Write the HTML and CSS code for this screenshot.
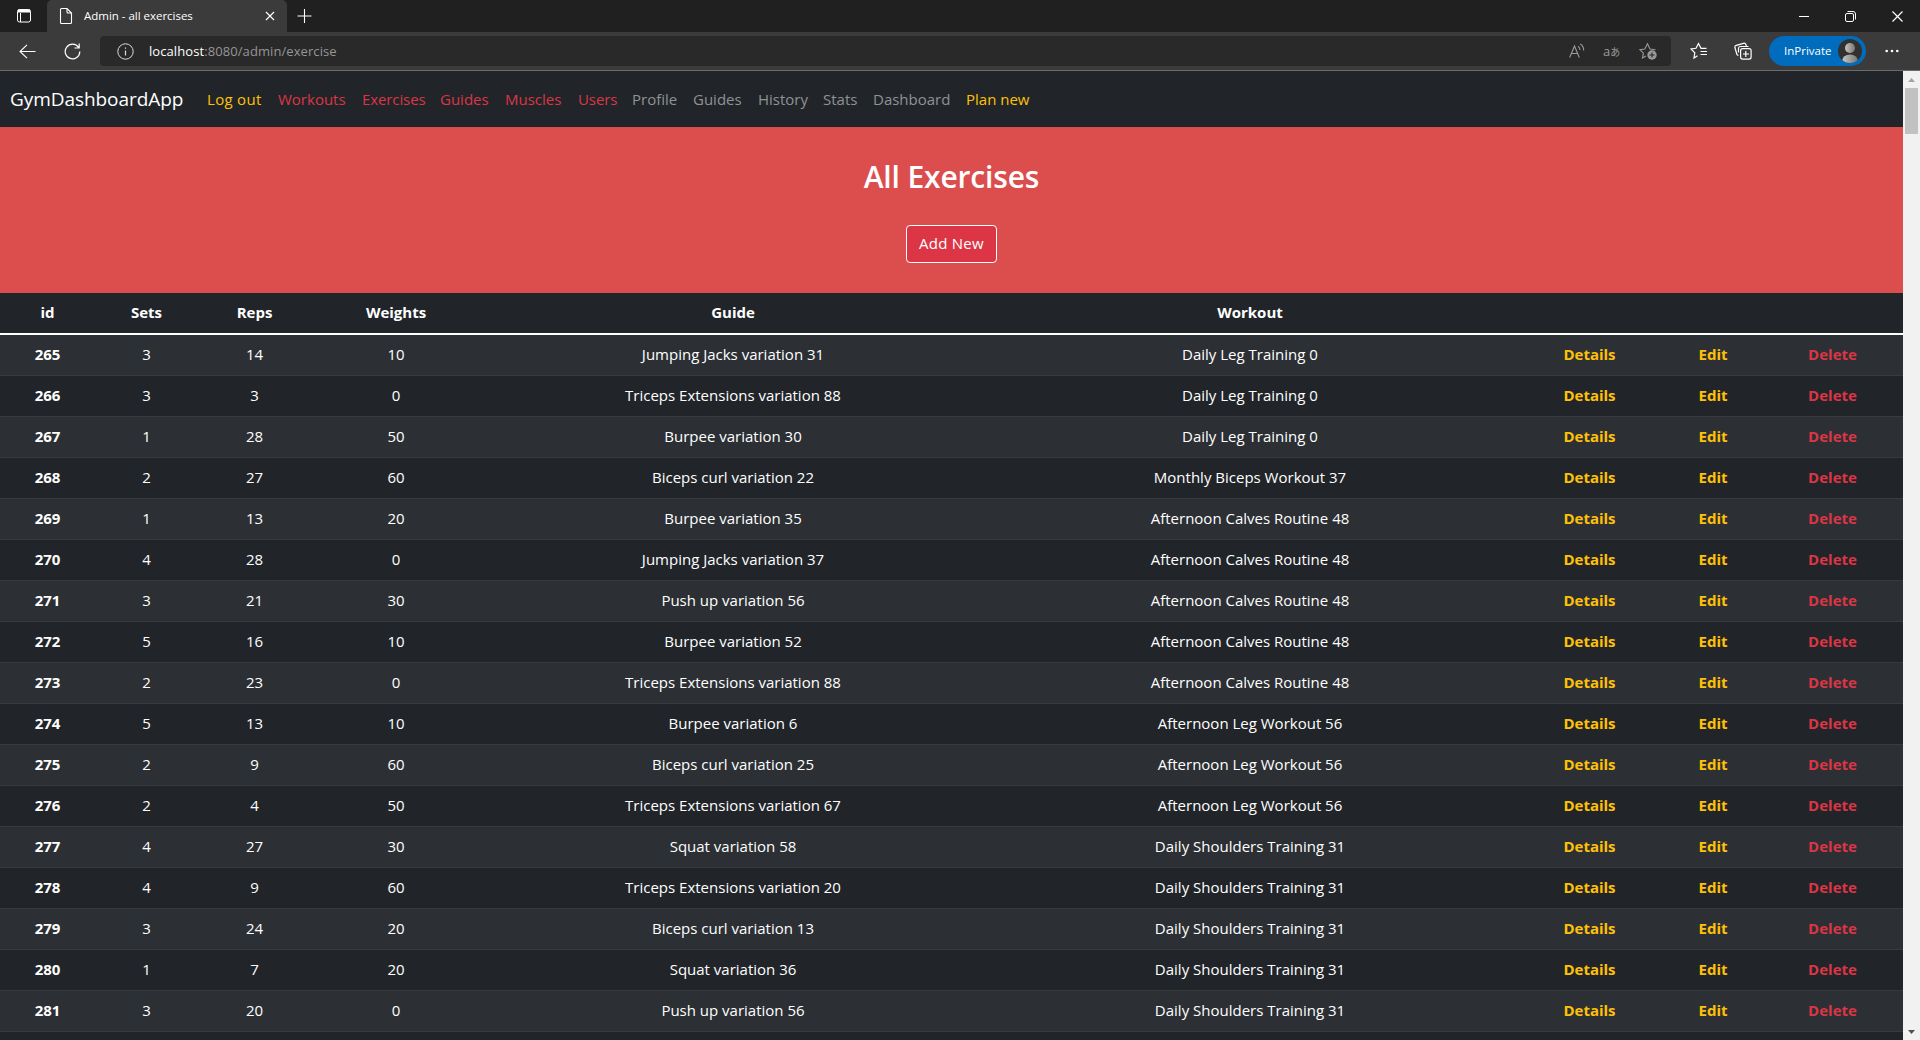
FILE: index.html
```html
<!DOCTYPE html>
<html lang="en">
<head>
<meta charset="utf-8">
<title>Admin - all exercises</title>
<link rel="stylesheet" href="styles.css">
</head>
<body>
<div class="window">
  <div class="tabbar">
    <svg class="tab-actions" width="16" height="16" viewBox="0 0 16 16" fill="none" stroke="#fff"><rect x="1.5" y="1.5" width="13" height="12.5" rx="2"/><path d="M2 3.5h12M2 2.5h12" stroke-width="2"/><path d="M4.5 5v9"/></svg>
    <div class="tab">
      <svg width="14" height="18" viewBox="0 0 14 18" fill="none" stroke="#fff" stroke-width="1.1"><path d="M2.5 1.5h5.5l4.5 4.5v9.5a1 1 0 0 1-1 1h-9a1 1 0 0 1-1-1v-13a1 1 0 0 1 1-1zM8 1.500v3.500a1 1 0 0 0 1 1h3.500"/></svg>
      <span class="tab-title">Admin - all exercises</span>
      <svg class="tab-close" width="10" height="10" viewBox="0 0 10 10" stroke="#fff" stroke-width="1.2"><path d="M1 1l8 8M9 1l-8 8"/></svg>
    </div>
    <svg class="new-tab" width="16" height="16" viewBox="0 0 16 16" stroke="#fff" stroke-width="1.1"><path d="M8.500 1v14M1.500 8h14"/></svg>
    <div class="controls">
      <svg width="10" height="10" viewBox="0 0 10 10" stroke="#fff"><path d="M0 5.500h10"/></svg>
      <svg width="11" height="11" viewBox="0 0 11 11" fill="none" stroke="#fff"><rect x=".5" y="2.500" width="8" height="8" rx="1.500"/><path d="M2.500 .5h5.500a2.500 2.500 0 0 1 2.500 2.500v5.500"/></svg>
      <svg width="11" height="11" viewBox="0 0 11 11" stroke="#fff" stroke-width="1.200"><path d="M.5 .5l10 10M10.500 .5l-10 10"/></svg>
    </div>
  </div>

  <div class="toolbar">
    <svg class="back" width="17" height="15" viewBox="0 0 17 15" fill="none" stroke="#fff" stroke-width="1.100"><path d="M16.500 7.500H1M8 .8L1 7.500l7 6.700"/></svg>
    <svg class="reload" width="17" height="17" viewBox="0 0 17 17" fill="none" stroke="#fff" stroke-width="1.200"><path d="M14.600 4.500a7.300 7.300 0 1 0 1.200 4M15.200 .5v4.500h-4.700"/></svg>
    <div class="address">
      <svg class="info" width="17" height="17" viewBox="0 0 17 17" fill="none" stroke="#ddd"><circle cx="8.500" cy="8.500" r="7.700"/><path d="M8.500 7.500v5M8.500 4.500v1.300" stroke-width="1.200"/></svg>
      <span class="url"><b>localhost</b>:8080/admin/exercise</span>
      <div class="address-actions">
        <svg width="16" height="16" viewBox="0 0 16 16" fill="none" stroke="#999" stroke-width="1.100"><path d="M.7 14.500L5.500 3l4.800 11.500M2.400 10.500h6.300M9 3.200q2 1.200 2 3.800M11.200 1q3.500 2 3.500 6.500"/></svg>
        <span class="translate">a<small>あ</small></span>
        <svg width="18" height="18" viewBox="0 0 18 18" fill="none" stroke="#999" stroke-width="1.100"><path d="M7 14l-3.500 2 .9-4.800L.9 7.700l4.900-.7L8.500 1.700l2.500 5.300 5.500.7"/><circle cx="13" cy="13" r="4.700" fill="#999" stroke="none"/><path d="M10.500 13h5M13 10.500v5" stroke="#292929"/></svg>
      </div>
    </div>
    <svg class="favorites" width="18" height="18" viewBox="0 0 18 18" fill="none" stroke="#fff" stroke-width="1.200"><path d="M7.500 13.700L4 16l.8-5.300L1 7l5-.7L8.500 1.500 11 6.300h5.500M10.500 9.500h6.500M10.500 12.500h6.500"/></svg>
    <svg class="collections" width="18" height="18" viewBox="0 0 18 18" fill="none" stroke="#fff" stroke-width="1.200"><rect x="6.600" y="6.600" width="10.500" height="10.500" rx="2"/><path d="M11.800 9v6M9 12h6M4.500 13.500A2 2 0 0 1 2.800 12L.9 5.500A2 2 0 0 1 2.300 3.300L9.500 1.300a2 2 0 0 1 2.400 1.200l.5 1.700M4.500 10.500V6.500a2 2 0 0 1 2-2h8"/></svg>
    <div class="profile"><span>InPrivate</span>
      <svg width="24" height="24" viewBox="0 0 24 24"><defs><linearGradient id="person"><stop stop-color="#c8c4c0"/><stop offset="1" stop-color="#777"/></linearGradient><clipPath id="disc"><circle cx="12" cy="12" r="12"/></clipPath></defs><circle cx="12" cy="12" r="12" fill="#323130"/><g clip-path="url(#disc)" fill="url(#person)"><circle cx="12" cy="9" r="5"/><path d="M4 24v-2q1-6.500 8-6.500t8 6.500v2z"/></g></svg>
    </div>
    <svg class="more" width="14" height="4" viewBox="0 0 14 4" fill="#fff"><circle cx="1.700" cy="2" r="1.300"/><circle cx="7" cy="2" r="1.300"/><circle cx="12.300" cy="2" r="1.300"/></svg>
  </div>

  <div class="viewport">
    <main class="page">
      <nav class="navbar">
        <a class="brand">GymDashboardApp</a>
        <a class="link warning w-logout">Log out</a>
        <a class="link danger w-workouts">Workouts</a>
        <a class="link danger w-exercises">Exercises</a>
        <a class="link danger w-guides">Guides</a>
        <a class="link danger w-muscles">Muscles</a>
        <a class="link danger w-users">Users</a>
        <a class="link w-profile">Profile</a>
        <a class="link w-guides">Guides</a>
        <a class="link w-history">History</a>
        <a class="link w-stats">Stats</a>
        <a class="link w-dashboard">Dashboard</a>
        <a class="link warning">Plan new</a>
      </nav>
      <header class="hero">
        <h1>All Exercises</h1>
        <a class="button">Add New</a>
      </header>
      <table class="exercises">
        <colgroup><col class="c-id"><col class="c-sets"><col class="c-reps"><col class="c-weights"><col class="c-guide"><col class="c-workout"><col class="c-details"><col class="c-edit"><col class="c-delete"></colgroup>
        <thead><tr><th>id</th><th>Sets</th><th>Reps</th><th>Weights</th><th>Guide</th><th>Workout</th><th></th><th></th><th></th></tr></thead>
        <tbody>
          <tr><th>265</th><td>3</td><td>14</td><td>10</td><td>Jumping Jacks variation 31</td><td>Daily Leg Training 0</td><th class="warning">Details</th><th class="warning">Edit</th><th class="danger">Delete</th></tr>
          <tr><th>266</th><td>3</td><td>3</td><td>0</td><td>Triceps Extensions variation 88</td><td>Daily Leg Training 0</td><th class="warning">Details</th><th class="warning">Edit</th><th class="danger">Delete</th></tr>
          <tr><th>267</th><td>1</td><td>28</td><td>50</td><td>Burpee variation 30</td><td>Daily Leg Training 0</td><th class="warning">Details</th><th class="warning">Edit</th><th class="danger">Delete</th></tr>
          <tr><th>268</th><td>2</td><td>27</td><td>60</td><td>Biceps curl variation 22</td><td>Monthly Biceps Workout 37</td><th class="warning">Details</th><th class="warning">Edit</th><th class="danger">Delete</th></tr>
          <tr><th>269</th><td>1</td><td>13</td><td>20</td><td>Burpee variation 35</td><td>Afternoon Calves Routine 48</td><th class="warning">Details</th><th class="warning">Edit</th><th class="danger">Delete</th></tr>
          <tr><th>270</th><td>4</td><td>28</td><td>0</td><td>Jumping Jacks variation 37</td><td>Afternoon Calves Routine 48</td><th class="warning">Details</th><th class="warning">Edit</th><th class="danger">Delete</th></tr>
          <tr><th>271</th><td>3</td><td>21</td><td>30</td><td>Push up variation 56</td><td>Afternoon Calves Routine 48</td><th class="warning">Details</th><th class="warning">Edit</th><th class="danger">Delete</th></tr>
          <tr><th>272</th><td>5</td><td>16</td><td>10</td><td>Burpee variation 52</td><td>Afternoon Calves Routine 48</td><th class="warning">Details</th><th class="warning">Edit</th><th class="danger">Delete</th></tr>
          <tr><th>273</th><td>2</td><td>23</td><td>0</td><td>Triceps Extensions variation 88</td><td>Afternoon Calves Routine 48</td><th class="warning">Details</th><th class="warning">Edit</th><th class="danger">Delete</th></tr>
          <tr><th>274</th><td>5</td><td>13</td><td>10</td><td>Burpee variation 6</td><td>Afternoon Leg Workout 56</td><th class="warning">Details</th><th class="warning">Edit</th><th class="danger">Delete</th></tr>
          <tr><th>275</th><td>2</td><td>9</td><td>60</td><td>Biceps curl variation 25</td><td>Afternoon Leg Workout 56</td><th class="warning">Details</th><th class="warning">Edit</th><th class="danger">Delete</th></tr>
          <tr><th>276</th><td>2</td><td>4</td><td>50</td><td>Triceps Extensions variation 67</td><td>Afternoon Leg Workout 56</td><th class="warning">Details</th><th class="warning">Edit</th><th class="danger">Delete</th></tr>
          <tr><th>277</th><td>4</td><td>27</td><td>30</td><td>Squat variation 58</td><td>Daily Shoulders Training 31</td><th class="warning">Details</th><th class="warning">Edit</th><th class="danger">Delete</th></tr>
          <tr><th>278</th><td>4</td><td>9</td><td>60</td><td>Triceps Extensions variation 20</td><td>Daily Shoulders Training 31</td><th class="warning">Details</th><th class="warning">Edit</th><th class="danger">Delete</th></tr>
          <tr><th>279</th><td>3</td><td>24</td><td>20</td><td>Biceps curl variation 13</td><td>Daily Shoulders Training 31</td><th class="warning">Details</th><th class="warning">Edit</th><th class="danger">Delete</th></tr>
          <tr><th>280</th><td>1</td><td>7</td><td>20</td><td>Squat variation 36</td><td>Daily Shoulders Training 31</td><th class="warning">Details</th><th class="warning">Edit</th><th class="danger">Delete</th></tr>
          <tr><th>281</th><td>3</td><td>20</td><td>0</td><td>Push up variation 56</td><td>Daily Shoulders Training 31</td><th class="warning">Details</th><th class="warning">Edit</th><th class="danger">Delete</th></tr>
        </tbody>
      </table>
    </main>
    <div class="scrollbar">
      <svg width="7" height="4" viewBox="0 0 7 4"><path d="M0 4L3.500 0 7 4z" fill="#a3a3a3"/></svg>
      <div class="thumb"></div>
      <svg class="down" width="7" height="4" viewBox="0 0 7 4"><path d="M0 0L3.500 4 7 0z" fill="#505050"/></svg>
    </div>
  </div>
</div>
</body>
</html>
```
FILE: styles.css
```css
* { box-sizing: border-box; }
body { margin: 0; background: #212529; color: #fff; font: 15px/24px "Open Sans", "Noto Sans CJK JP", sans-serif; }
svg { display: block; flex: none; }
.window { width: 1920px; height: 1040px; display: flex; flex-direction: column; overflow: hidden; }

.tabbar { height: 32px; flex: none; display: flex; align-items: center; background: #202020; }
.tab-actions { margin: 0 15px 0 16px; }
.tab { width: 240px; height: 32px; display: flex; align-items: center; padding: 0 12px; background: #3b3b3b; border-radius: 5px 5px 0 0; }
.tab-title { margin-left: 11px; font-size: 11.5px; letter-spacing: -.02px; }
.tab-close { margin-left: auto; }
.new-tab { margin-left: 9px; }
.controls { margin-left: auto; display: flex; align-items: center; gap: 36px; padding-right: 17px; }

.toolbar { height: 39px; flex: none; display: flex; align-items: center; background: #3b3b3b; border-bottom: 1px solid #6b6b6b; }
.back { margin-left: 19px; }
.reload { margin-left: 28px; }
.address { width: 1571px; height: 30px; margin-left: 19px; display: flex; align-items: center; background: #292929; border-radius: 4px; padding: 0 14px 0 17px; }
.url { margin-left: 15px; font-size: 13px; letter-spacing: .08px; color: #969696; }
.url b { font-weight: 400; color: #fff; }
.address-actions { margin-left: auto; display: flex; align-items: center; gap: 18px; color: #999; }
.translate { width: 18px; font-size: 13px; line-height: 16px; white-space: nowrap; }
.translate small { font-size: 10px; }
.favorites { margin-left: 19px; }
.collections { margin-left: 26px; }
.profile { width: 97px; height: 30px; margin-left: 17px; border-radius: 15px; background: #006cbe; display: flex; align-items: center; justify-content: space-between; padding: 0 4px 0 15px; font-size: 11.5px; }
.more { margin-left: 19px; }

.viewport { flex: 1; min-height: 0; display: flex; }
.page { width: 1903px; overflow: hidden; }
.navbar { height: 56px; display: flex; align-items: center; padding-left: 10px; color: #909294; }
.brand { width: 197px; color: #fff; font-size: 19px; line-height: 30px; letter-spacing: -.06px; }
.link { white-space: nowrap; }
.warning { color: #ffc107; }
.danger { color: #dc3545; }
.w-logout { width: 71px; letter-spacing: .3px; }
.w-workouts { width: 84px; }
.w-exercises { width: 78px; letter-spacing: -.1px; }
.w-guides { width: 65px; }
.w-muscles { width: 73px; }
.w-users { width: 54px; letter-spacing: -.1px; }
.w-profile { width: 61px; }
.w-history { width: 65px; }
.w-stats { width: 50px; }
.w-dashboard { width: 93px; }

.hero { height: 166px; display: flex; flex-direction: column; align-items: center; background: #dc4e4e; padding-top: 31px; }
h1 { margin: 0; font-size: 30px; font-weight: 600; line-height: 38px; letter-spacing: -.15px; }
.button { width: 91px; height: 38px; margin-top: 29px; border: 1px solid #fff; border-radius: 4px; background: #dc3545; text-align: center; line-height: 34px; letter-spacing: .25px; }

.exercises { width: 1903px; table-layout: fixed; border-collapse: separate; border-spacing: 0; text-align: center; }
.exercises th, .exercises td { height: 41px; padding: 0 0 2px; border-bottom: 1px solid #373b3e; }
.exercises th { font-weight: 700; }
.exercises thead th { height: 42px; border-bottom: 2px solid #fff; }
.exercises tbody tr:nth-child(odd) { background: #2c3034; }
.c-id { width: 95px; }
.c-sets { width: 103px; }
.c-reps { width: 113px; }
.c-weights { width: 170px; }
.c-guide { width: 504px; }
.c-workout { width: 530px; }
.c-details { width: 149px; }
.c-edit { width: 98px; }
.c-delete { width: 141px; }

.scrollbar { width: 17px; background: #f1f1f1; display: flex; flex-direction: column; align-items: center; padding: 7px 0 6px; }
.thumb { width: 13px; height: 46px; margin-top: 6px; background: #c1c1c1; }
.down { margin-top: auto; }
```
